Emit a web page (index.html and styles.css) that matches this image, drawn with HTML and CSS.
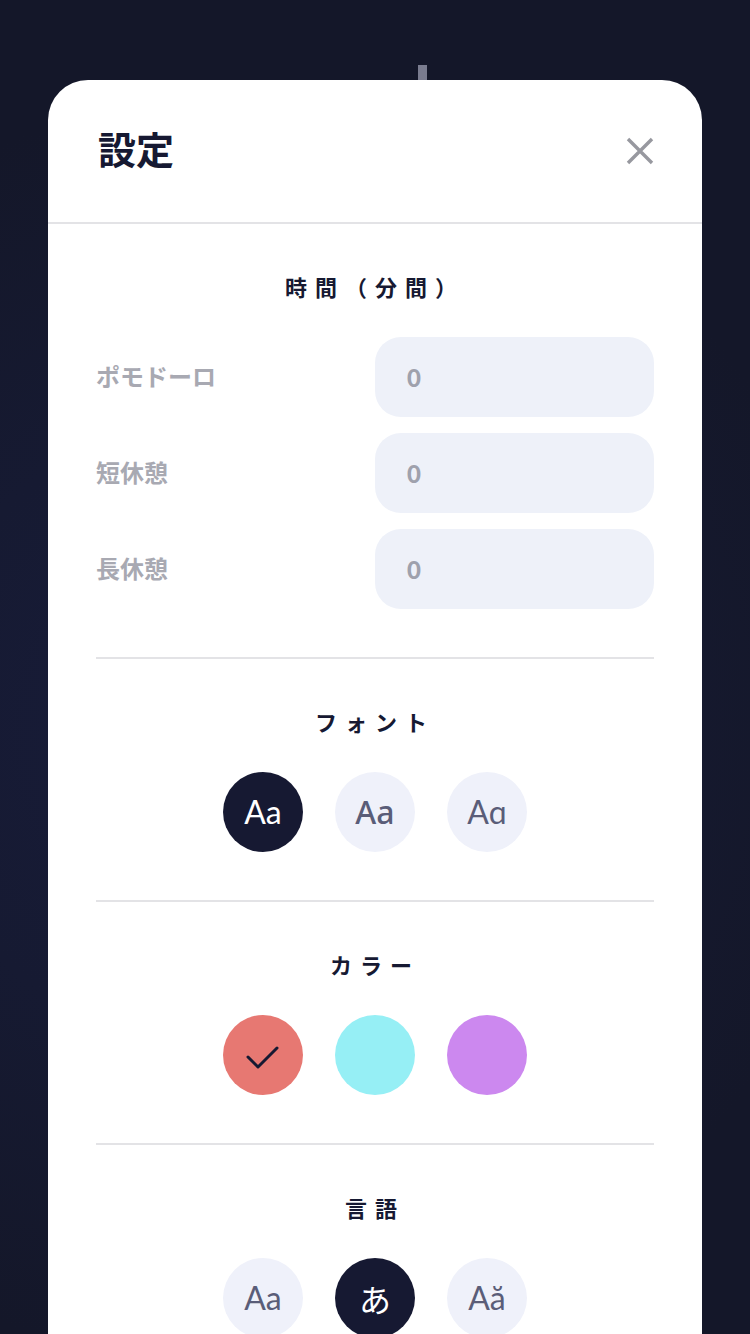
FILE: index.html
```html
<!DOCTYPE html>
<html lang="ja">
<head>
<meta charset="utf-8">
<title>設定</title>
<link rel="stylesheet" href="styles.css">
</head>
<body>
<div class="backdrop"><span class="tick"></span></div>
<div class="modal">
  <header class="modal-head">
    <h2 class="title">設定</h2>
    <button class="close" aria-label="閉じる">
      <svg width="28" height="28" viewBox="0 0 28 28"><path d="M2 2 L26 26 M26 2 L2 26" stroke="#97989f" stroke-width="3.4" fill="none"/></svg>
    </button>
  </header>
  <section class="section">
    <h3 class="heading">時間（分間）</h3>
    <div class="rows">
      <div class="row"><span class="label">ポモドーロ</span><div class="input">0</div></div>
      <div class="row"><span class="label">短休憩</span><div class="input">0</div></div>
      <div class="row"><span class="label">長休憩</span><div class="input">0</div></div>
    </div>
  </section>
  <section class="section">
    <h3 class="heading">フォント</h3>
    <div class="choices">
      <div class="chip active f1">Aa</div>
      <div class="chip f2">Aa</div>
      <div class="chip f3">Aɑ</div>
    </div>
  </section>
  <section class="section">
    <h3 class="heading">カラー</h3>
    <div class="choices">
      <div class="chip red">
        <svg width="80" height="80" viewBox="0 0 80 80"><path d="M25 42 L35 52 L54 33" stroke="#161932" stroke-width="3" fill="none" stroke-linecap="round" stroke-linejoin="round"/></svg>
      </div>
      <div class="chip cyan"></div>
      <div class="chip purple"></div>
    </div>
  </section>
  <section class="section last">
    <h3 class="heading">言語</h3>
    <div class="choices">
      <div class="chip f1">Aa</div>
      <div class="chip active jp">あ</div>
      <div class="chip f1">Aă</div>
    </div>
  </section>
</div>
</body>
</html>
```
FILE: styles.css
```css
html, body {
  margin: 0;
  padding: 0;
  height: 1334px;
  overflow: hidden;
}
body {
  background: radial-gradient(circle at 30% 55%, #181c3a 0%, #161a32 35%, #141729 70%);
  font-family: "Noto Sans CJK JP", "Noto Sans", sans-serif;
  position: relative;
}
.backdrop {
  position: absolute;
  inset: 0;
  pointer-events: none;
}
.tick {
  position: absolute;
  left: 418px;
  top: 65px;
  width: 9px;
  height: 20px;
  background: #7a7c8f;
}
.modal {
  position: relative;
  margin: 80px 48px 0;
  background: #fff;
  border-radius: 40px 40px 0 0;
}
.modal-head {
  height: 144px;
  box-sizing: border-box;
  padding: 0 48px 0 50px;
  display: flex;
  align-items: center;
  justify-content: space-between;
  border-bottom: 2px solid #e3e3e6;
}
.title {
  margin: 0 0 7px;
  font-size: 38px;
  font-weight: 700;
  color: #161932;
  line-height: 1;
}
.close {
  border: 0;
  background: none;
  padding: 0;
  width: 28px;
  height: 28px;
  display: block;
}
.close svg { display: block; }
.section {
  margin: 0 48px;
  padding: 48px 0 48px;
  border-bottom: 2px solid #e3e3e6;
}
.section.last { border-bottom: 0; }
.heading {
  margin: 0 0 37px;
  text-align: center;
  font-size: 22px;
  line-height: 28px;
  font-weight: 700;
  letter-spacing: 8px;
  color: #161932;
}
.rows {
  display: flex;
  flex-direction: column;
  gap: 16px;
}
.row {
  display: flex;
  align-items: center;
  justify-content: space-between;
}
.label {
  font-size: 24px;
  font-weight: 700;
  color: #a8a9b2;
  margin-bottom: 3px;
}
.input {
  width: 279px;
  height: 80px;
  box-sizing: border-box;
  border-radius: 26px;
  background: #eef1f9;
  padding-left: 32px;
  display: flex;
  align-items: center;
  font-family: "Lato", "Noto Sans", sans-serif;
  font-size: 24px;
  font-weight: 900;
  color: #9fa1ad;
}
.choices {
  display: flex;
  justify-content: center;
  gap: 32px;
}
.chip {
  width: 80px;
  height: 80px;
  border-radius: 50%;
  background: #eff1fa;
  color: #5a5d78;
  display: flex;
  align-items: center;
  justify-content: center;
  font-size: 32px;
  line-height: 1;
}
.chip svg { display: block; }
.chip.active {
  background: #161932;
  color: #fff;
}
.f1 { font-family: "Lato", "Noto Sans", sans-serif; }
.f2 { font-family: "Noto Sans", sans-serif; font-weight: 500; }
.f3 { font-family: "Lato", "Noto Sans", sans-serif; }
.jp { font-family: "Noto Sans CJK JP", sans-serif; font-size: 32px; }
.red { background: #e77872; }
.cyan { background: #96eff5; }
.purple { background: #cc88ef; }
```
